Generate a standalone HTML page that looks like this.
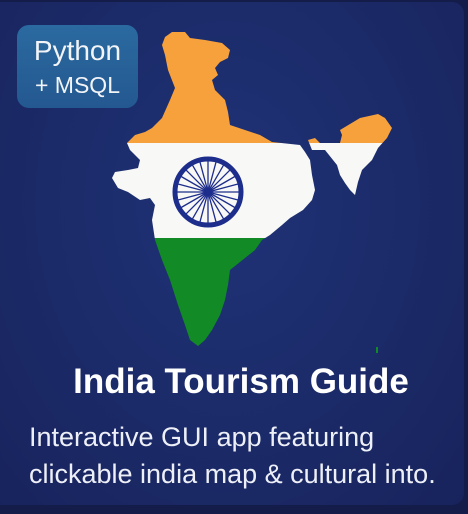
<!DOCTYPE html>
<html><head><style>
html,body{margin:0;padding:0;}
body{width:468px;height:514px;background:#141c4a;overflow:hidden;position:relative;font-family:"Liberation Sans",sans-serif;}
.card{position:absolute;left:-10px;top:2px;width:474px;height:503px;border-radius:12px;background:radial-gradient(ellipse at 50% 40%,#1f3377 0%,#1b2a68 55%,#18235c 100%);}
.badge{position:absolute;left:17px;top:25px;width:121px;height:83px;border-radius:12px;background:linear-gradient(#2a6aa0,#245890);color:#f2f4f8;text-align:center;}
.badge .a{position:absolute;left:0;right:0;top:10px;font-size:28px;}
.badge .b{position:absolute;left:0;right:0;top:47px;font-size:23px;}
.title{position:absolute;left:0;width:482px;text-align:center;top:362px;color:#fff;font-weight:bold;font-size:35px;}
.sub{position:absolute;left:29px;color:#eef0f8;font-size:27px;white-space:nowrap;}
</style></head><body>
<div class="card"></div>
<svg width="468" height="514" style="position:absolute;left:0;top:0">
<defs>
<clipPath id="m">
<polygon points="165,37 172,32 185,32 190,38 205,40 222,43 230,50 228,58 220,62 215,68 218,75 212,80 215,90 225,100 228,112 230,125 245,130 260,135 272,142 300,145 305,152 310,160 312,175 315,190 312,200 303,210 290,218 282,225 270,235 262,240 255,250 240,262 230,270 228,285 225,300 220,315 212,330 205,340 198,346 190,340 185,325 178,305 170,280 162,260 155,240 152,220 155,205 150,198 140,200 128,192 118,188 112,178 115,172 128,170 138,168 140,160 130,150 127,143 135,135 145,132 152,128 162,118 170,100 175,88 168,70 165,55 162,45"/>
<polygon points="340,130 360,118 378,114 385,118 392,128 387,138 378,148 372,160 362,170 358,182 355,195 350,190 345,183 340,175 337,165 325,150 312,150 308,140 315,138 320,143 340,143 342,135"/>
</clipPath>
</defs>
<g clip-path="url(#m)">
<rect x="100" y="20" width="300" height="123" fill="#f7a13c"/>
<rect x="100" y="143" width="300" height="95" fill="#f8f8f6"/>
<rect x="100" y="238" width="300" height="120" fill="#128a25"/>
</g>
<g transform="translate(208,192)" stroke="#1d2d8c">
<circle r="33" fill="none" stroke-width="5"/>
<g stroke-width="1.3">
<line x1="0" y1="-31" x2="0" y2="31"/>
<line x1="0" y1="-31" x2="0" y2="31" transform="rotate(15)"/>
<line x1="0" y1="-31" x2="0" y2="31" transform="rotate(30)"/>
<line x1="0" y1="-31" x2="0" y2="31" transform="rotate(45)"/>
<line x1="0" y1="-31" x2="0" y2="31" transform="rotate(60)"/>
<line x1="0" y1="-31" x2="0" y2="31" transform="rotate(75)"/>
<line x1="0" y1="-31" x2="0" y2="31" transform="rotate(90)"/>
<line x1="0" y1="-31" x2="0" y2="31" transform="rotate(105)"/>
<line x1="0" y1="-31" x2="0" y2="31" transform="rotate(120)"/>
<line x1="0" y1="-31" x2="0" y2="31" transform="rotate(135)"/>
<line x1="0" y1="-31" x2="0" y2="31" transform="rotate(150)"/>
<line x1="0" y1="-31" x2="0" y2="31" transform="rotate(165)"/>
</g>
<circle r="3" fill="#1d2d8c"/>
</g>
<rect x="376" y="347" width="2" height="6" fill="#128a25"/>
</svg>
<div class="badge"><div class="a">Python</div><div class="b">+ MSQL</div></div>
<div class="title">India Tourism Guide</div>
<div class="sub" style="top:422px">Interactive GUI app featuring</div>
<div class="sub" style="top:459px">clickable india map &amp; cultural into.</div>
</body></html>
